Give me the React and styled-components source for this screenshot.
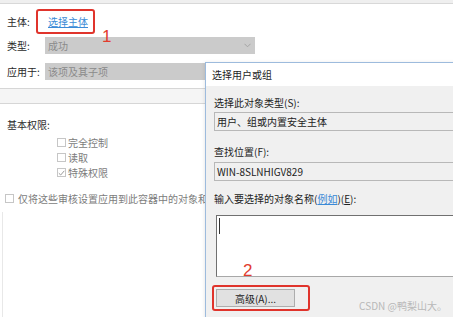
import React from 'react'
import styled, { createGlobalStyle, css } from 'styled-components'

const GlobalStyle = createGlobalStyle`
  html, body {
    margin: 0;
    padding: 0;
    background: #fff;
  }
  body {
    font-family: "Noto Sans CJK SC", "Noto Sans", sans-serif;
    font-size: 10px;
    color: #222;
  }
`

const Screen = styled.div`
  position: relative;
  width: 453px;
  height: 317px;
  overflow: hidden;
  background: #fff;
`

/* ---------- background window: audit entry ---------- */

const AuditWindow = styled.div`
  display: flex;
  flex-direction: column;
  height: 100%;
`

const TopStrip = styled.div`
  height: 3px;
  background: #efefef;
  border-bottom: 1px solid #d8d8d8;
`

const Form = styled.div`
  display: flex;
  flex-direction: column;
  padding: 5px 0 0 7px;
`

const PrincipalRow = styled.div`
  display: flex;
  align-items: center;
  height: 25px;
`

const FieldRow = styled.div`
  display: grid;
  grid-template-columns: 38px 210px;
  align-items: center;
  height: 17px;
  margin-top: ${p => p.$gap}px;
`

const Label = styled.span`
  line-height: 14px;
  white-space: nowrap;
  color: #2a2a2a;
  ${p => p.$w && css`width: ${p.$w}px;`}
`

const RedFrame = styled.div`
  position: relative;
  box-sizing: border-box;
  display: flex;
  align-items: center;
  border: 2px solid #e0342c;
  border-radius: 3px;
`

const PrincipalFrame = styled(RedFrame)`
  width: 59px;
  height: 25px;
  padding-left: 10px;
`

const Link = styled.a`
  color: #3b8ad6;
  text-decoration: underline;
  white-space: nowrap;
  cursor: pointer;
`

const StepNumber = styled.span`
  position: absolute;
  left: ${p => p.$x}px;
  top: ${p => p.$y}px;
  font-family: "Liberation Sans", Arial, sans-serif;
  font-size: 17px;
  line-height: 1;
  color: #e23b2e;
`

const Select = styled.div`
  box-sizing: border-box;
  height: 17px;
  display: flex;
  align-items: center;
  justify-content: space-between;
  padding: 0 4px 0 3px;
  background: #cbcbcb;
  color: #8a8a8a;
  white-space: nowrap;
`

const Band = styled.div`
  margin-top: 8px;
  height: 14px;
  background: #f5f5f5;
  border-top: 1px solid #d6d6d6;
  border-bottom: 1px solid #d6d6d6;
`

const Perms = styled.div`
  display: flex;
  flex-direction: column;
  padding-left: 7px;
`

const PermTitle = styled(Label)`
  margin-top: 14px;
`

const CheckList = styled.div`
  display: flex;
  flex-direction: column;
  margin-top: 3px;
  padding-left: 50px;
`

const CheckItem = styled.label`
  display: flex;
  align-items: center;
  gap: ${p => p.$gap || 2}px;
  height: 15px;
  color: #7c7c7c;
  white-space: nowrap;
`

const Box = styled.span`
  box-sizing: border-box;
  width: 9px;
  height: 9px;
  flex: none;
  display: flex;
  align-items: center;
  justify-content: center;
  border: 1px solid #c6c6c6;
  background: #fff;
`

const ApplyOnly = styled(CheckItem)`
  margin: 11px 0 0 -2px;
`

const Lower = styled.div`
  flex: 1;
  margin: 6px 0 0 2px;
  border-left: 1px solid #e8e8e8;
`

function Check({ checked }) {
  return (
    <Box>
      {checked && (
        <svg width="7" height="6" viewBox="0 0 7 6">
          <path d="M0.8 3.2 L2.7 5 L6.3 0.8" fill="none" stroke="#9a9a9a" strokeWidth="1" />
        </svg>
      )}
    </Box>
  )
}

function Chevron() {
  return (
    <svg width="7" height="5" viewBox="0 0 7 5">
      <path d="M0.5 0.8 L3.5 3.8 L6.5 0.8" fill="none" stroke="#a4a4a4" strokeWidth="1" />
    </svg>
  )
}

/* ---------- dialog: select users or groups ---------- */

const Dialog = styled.div`
  position: absolute;
  left: 205px;
  top: 62px;
  width: 270px;
  bottom: -20px;
  display: flex;
  flex-direction: column;
  background: #f0f0f0;
  border: 1px solid #9dbbdd;
  box-shadow: -1px 0 3px rgba(0, 0, 0, 0.08);
`

const TitleBar = styled.div`
  height: 23px;
  display: flex;
  align-items: center;
  padding-left: 6px;
  background: #fff;
  color: #1e1e1e;
`

const DialogBody = styled.div`
  display: flex;
  flex-direction: column;
  padding: 10px 0 0 8px;
`

const DlgLabel = styled.span`
  line-height: 14px;
  white-space: nowrap;
  color: #222;
  margin-top: ${p => p.$gap || 0}px;
`

const DlgLink = styled.a`
  color: #3b8ad6;
  text-decoration: underline;
`

const ReadField = styled.div`
  box-sizing: border-box;
  height: 19px;
  margin-top: ${p => p.$gap}px;
  display: flex;
  align-items: center;
  padding-left: 2px;
  border: 1px solid #b8b8b8;
  background: #f0f0f0;
  color: #222;
  white-space: nowrap;
`

const NameBox = styled.div`
  position: relative;
  box-sizing: border-box;
  height: 62px;
  margin: 9px 0 0 2px;
  background: #fff;
  border: 1px solid;
  border-color: #707070 #d0d0d0 #a8a8a8 #707070;
`

const Caret = styled.span`
  display: block;
  width: 1px;
  height: 16px;
  margin: 2px 0 0 2px;
  background: #333;
`

const ButtonFrame = styled(RedFrame)`
  width: 98px;
  height: 26px;
  margin: 8px 0 0 -2px;
  padding: 0 2px;
`

const Button = styled.button`
  box-sizing: border-box;
  width: 79px;
  height: 18px;
  padding: 0;
  border: 1px solid #adadad;
  background: #e1e1e1;
  font: inherit;
  color: #1e1e1e;
  cursor: pointer;
`

const Watermark = styled.span`
  position: absolute;
  right: 6px;
  bottom: 5px;
  line-height: 12px;
  font-size: 10px;
  color: #b8b8b8;
  white-space: nowrap;
`

export default function App() {
  return (
    <Screen>
      <GlobalStyle />
      <AuditWindow>
        <TopStrip />
        <Form>
          <PrincipalRow>
            <Label $w={29}>主体:</Label>
            <PrincipalFrame>
              <Link>选择主体</Link>
              <StepNumber $x={64} $y={17}>1</StepNumber>
            </PrincipalFrame>
          </PrincipalRow>
          <FieldRow $gap={3}>
            <Label>类型:</Label>
            <Select>
              <span>成功</span>
              <Chevron />
            </Select>
          </FieldRow>
          <FieldRow $gap={9}>
            <Label>应用于:</Label>
            <Select>
              <span>该项及其子项</span>
            </Select>
          </FieldRow>
        </Form>
        <Band />
        <Perms>
          <PermTitle>基本权限:</PermTitle>
          <CheckList>
            <CheckItem><Check />完全控制</CheckItem>
            <CheckItem><Check />读取</CheckItem>
            <CheckItem><Check checked />特殊权限</CheckItem>
          </CheckList>
          <ApplyOnly $gap={4}>
            <Check />仅将这些审核设置应用到此容器中的对象和/或容器
          </ApplyOnly>
        </Perms>
        <Lower />
      </AuditWindow>

      <Dialog>
        <TitleBar>选择用户或组</TitleBar>
        <DialogBody>
          <DlgLabel>选择此对象类型(S):</DlgLabel>
          <ReadField $gap={2}>用户、组或内置安全主体</ReadField>
          <DlgLabel $gap={14}>查找位置(F):</DlgLabel>
          <ReadField $gap={3}>WIN-8SLNHIGV829</ReadField>
          <DlgLabel $gap={11}>
            输入要选择的对象名称(<DlgLink>例如</DlgLink>)(<u>E</u>):
          </DlgLabel>
          <NameBox>
            <Caret />
            <StepNumber $x={26} $y={46}>2</StepNumber>
          </NameBox>
          <ButtonFrame>
            <Button>高级(A)...</Button>
          </ButtonFrame>
        </DialogBody>
      </Dialog>

      <Watermark>CSDN @鸭梨山大。</Watermark>
    </Screen>
  )
}
